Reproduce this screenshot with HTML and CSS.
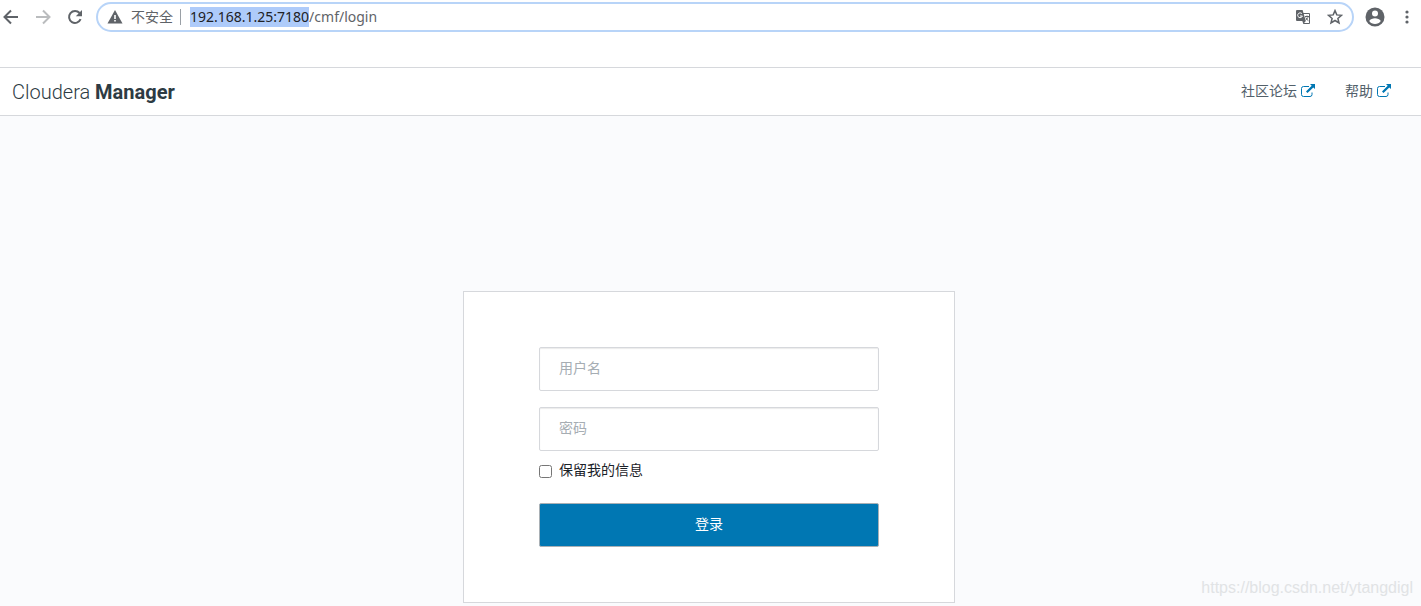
FILE: index.html
```html
<!DOCTYPE html>
<html lang="zh-CN">
  <head>
    <meta charset="UTF-8" />
    <meta name="viewport" content="width=device-width, initial-scale=1" />
    <title>Cloudera Manager</title>
    <link rel="stylesheet" href="styles.css">
  </head>

  <body>
    <div class="toolbar">
      <button class="tool" type="button" aria-label="后退">
        <svg width="16" height="16" viewBox="0 0 16 16"><path d="M15 8H2M8 1.5L1.5 8L8 14.5" /></svg>
      </button>
      <button class="tool disabled" type="button" aria-label="前进" disabled>
        <svg width="16" height="16" viewBox="0 0 16 16"><path d="M1 8H14M8 1.5L14.5 8L8 14.5" /></svg>
      </button>
      <button class="tool" type="button" aria-label="刷新">
        <svg width="16" height="16" viewBox="0 0 16 16">
          <path d="M13.6 10.2A6 6 0 1 1 12.6 4" />
          <path class="solid" d="M15 1V7.2H8.8Z" />
        </svg>
      </button>
      <div class="address-bar">
        <svg class="warning" width="16" height="14" viewBox="0 0 16 14">
          <path fill="#5f6368" d="M8 0L15.5 13.5H.5Z" />
          <path fill="#fff" d="M7.2 5h1.6v4H7.2zM7.2 10h1.6v1.6H7.2z" />
        </svg>
        <span class="insecure">不安全</span>
        <input id="url" class="url" type="text" value="192.168.1.25:7180/cmf/login" aria-label="地址" spellcheck="false" />
        <button class="tool" type="button" aria-label="翻译">
          <svg width="16" height="16" viewBox="0 0 16 16">
            <path class="page" d="M7 4.500h7.500v10H8.500z" />
            <path class="solid" d="M2 1h5.600l3.200 11H2a1 1 0 0 1-1-1V2a1 1 0 0 1 1-1z" />
            <path class="solid" d="M7.500 12h3.300l-2.300 2.700z" />
            <path class="letter" d="M7 4.800a2.400 2.400 0 1 0 .4 2.200H5" />
            <path class="mark" d="M10 7.500h4M12 6.500v1M13.200 7.500c-.3 1.500-1.200 2.600-2.400 3.600M10.800 8.500c.5 1.400 1.400 2.400 2.600 3.200" />
          </svg>
        </button>
        <button class="tool" type="button" aria-label="收藏">
          <svg width="16" height="16" viewBox="0 0 16 16">
            <path class="star" d="M8 1.600l1.800 4.300 4.700.4-3.600 3.100 1.100 4.600L8 11.500 4 14l1.100-4.600L1.500 6.300l4.700-.4z" />
          </svg>
        </button>
      </div>
      <button class="tool" type="button" aria-label="用户">
        <svg width="20" height="20" viewBox="0 0 20 20">
          <circle class="solid" cx="10" cy="10" r="9.5" />
          <circle class="white" cx="10" cy="6.500" r="3" />
          <path class="white" d="M4.200 14c1-2 3.600-2.800 5.800-2.800s4.800.8 5.800 2.800a7 7 0 0 1-11.600 0z" />
        </svg>
      </button>
      <button class="tool" type="button" aria-label="菜单">
        <svg width="4" height="16" viewBox="0 0 4 16">
          <circle class="solid" cx="2" cy="3" r="1.6" />
          <circle class="solid" cx="2" cy="8" r="1.6" />
          <circle class="solid" cx="2" cy="13" r="1.6" />
        </svg>
      </button>
    </div>

    <header class="navbar">
      <div class="brand">Cloudera <b>Manager</b></div>
      <nav class="links">
        <a href="#">社区论坛
          <svg width="14" height="14" viewBox="0 0 14 14"><path d="M8 2.500H2.500Q.5 2.500.5 4.500V10.500Q.5 12.500 2.500 12.500H9Q11 12.500 11 10.500V8.500" /><path class="arrow" d="M9 0H14V5L12.300 3.500L6.500 9L5 7.500L10.700 1.800Z" /></svg>
        </a>
        <a href="#">帮助
          <svg width="14" height="14" viewBox="0 0 14 14"><path d="M8 2.500H2.500Q.5 2.500.5 4.500V10.500Q.5 12.500 2.500 12.500H9Q11 12.500 11 10.500V8.500" /><path class="arrow" d="M9 0H14V5L12.300 3.500L6.500 9L5 7.500L10.700 1.800Z" /></svg>
        </a>
      </nav>
    </header>

    <main class="content">
      <form class="login-form">
        <input class="field" type="text" name="username" placeholder="用户名" aria-label="用户名" />
        <input class="field" type="password" name="password" placeholder="密码" aria-label="密码" />
        <label class="remember"><input type="checkbox" name="remember" />保留我的信息</label>
        <button class="submit" type="submit">登录</button>
      </form>
      <div class="watermark">https://blog.csdn.net/ytangdigl</div>
    </main>

    <script>
      // select the host part of the address
      const url = document.getElementById("url");
      url.focus();
      url.setSelectionRange(0, url.value.indexOf("/"));
    </script>
  </body>
</html>
```
FILE: styles.css
```css
* {
  box-sizing: border-box;
}

body {
  display: flex;
  flex-direction: column;
  min-height: 100vh;
  margin: 0;
  background-color: #fff;
  color: #1b2229;
  font-family: "Noto Sans", "Noto Sans CJK SC", sans-serif;
  font-size: 14px;
  line-height: 20px;
}

input,
button {
  font: inherit;
}

/* browser bar */
.toolbar {
  display: flex;
  align-items: center;
  gap: 16px;
  height: 67px;
  padding: 2px 12px 35px 3px;
}

.tool {
  display: flex;
  padding: 0;
  border: none;
  background: none;
  cursor: pointer;
}

.tool path {
  fill: none;
  stroke: #5f6368;
  stroke-width: 2;
}

.tool.disabled path {
  stroke: #babcbe;
}

.tool .solid {
  fill: #5f6368;
  stroke: none;
}

.tool .white {
  fill: #fff;
  stroke: none;
}

.tool .page {
  fill: #fff;
  stroke-width: 1;
}

.tool .letter {
  stroke: #fff;
  stroke-width: 1;
}

.tool .mark {
  stroke-width: 1;
}

.tool .star {
  stroke-width: 1.5;
}

.address-bar {
  display: flex;
  flex: 1;
  align-items: center;
  gap: 16px;
  height: 30px;
  margin: 0 -5px 0 -3px;
  padding: 0 9px;
  border: 2px solid #b8d4f8;
  border-radius: 15px;
}

.address-bar + .tool {
  margin-right: 4px;
}

.warning {
  margin-right: -8px;
}

.insecure {
  margin-right: -7px;
  padding-right: 7px;
  border-right: 1px solid #9aa0a6;
  color: #5f6368;
  line-height: 16px;
}

.url {
  flex: 1;
  min-width: 0;
  padding: 0;
  border: none;
  outline: none;
  color: #5f6368;
  caret-color: transparent;
}

.url::selection {
  background-color: #aecbfa;
  color: #202124;
}

/* page header */
.navbar {
  display: flex;
  align-items: center;
  justify-content: space-between;
  height: 49px;
  padding: 0 30px 0 12px;
  border-top: 1px solid #d6d8dc;
  border-bottom: 1px solid #d6d8dc;
}

.brand {
  color: #2d3b43;
  font-family: Roboto, sans-serif;
  font-size: 20px;
  font-weight: 300;
}

.brand b {
  font-weight: 700;
}

.links {
  display: flex;
  gap: 30px;
  padding-bottom: 2px;
}

.links a {
  display: flex;
  align-items: center;
  gap: 4px;
  color: #52606a;
  text-decoration: none;
}

.links path {
  fill: none;
  stroke: #0077b3;
  stroke-width: 1;
}

.links .arrow {
  fill: #0077b3;
  stroke: none;
}

/* login */
.content {
  position: relative;
  flex: 1;
  padding: 175px 3px 3px 0;
  background-color: #fafbfd;
}

.login-form {
  display: flex;
  flex-direction: column;
  max-width: 492px;
  margin: 0 auto;
  padding: 55px 75px;
  border: 1px solid #d6d8dc;
  background-color: #fff;
}

.field {
  height: 44px;
  margin-bottom: 16px;
  padding: 0 19px 4px;
  border: 1px solid #d6d8dc;
  border-radius: 2px;
  box-shadow: inset 0 1px 1px rgba(0, 0, 0, 0.08);
}

.field::placeholder {
  color: #a6adb3;
}

.remember {
  display: flex;
  align-items: center;
  gap: 7px;
  margin: -7px 0 23px;
}

.remember input {
  width: 13px;
  height: 13px;
  margin: 2px 0 0;
}

.submit {
  height: 44px;
  padding: 0 0 2px;
  border: 1px solid #a9b0b5;
  border-radius: 2px;
  background-color: #0077b3;
  color: #fff;
  cursor: pointer;
}

.watermark {
  position: absolute;
  right: 8px;
  bottom: 8px;
  color: #e1e3e5;
  font-family: "Liberation Sans", sans-serif;
  font-size: 16px;
}
```
